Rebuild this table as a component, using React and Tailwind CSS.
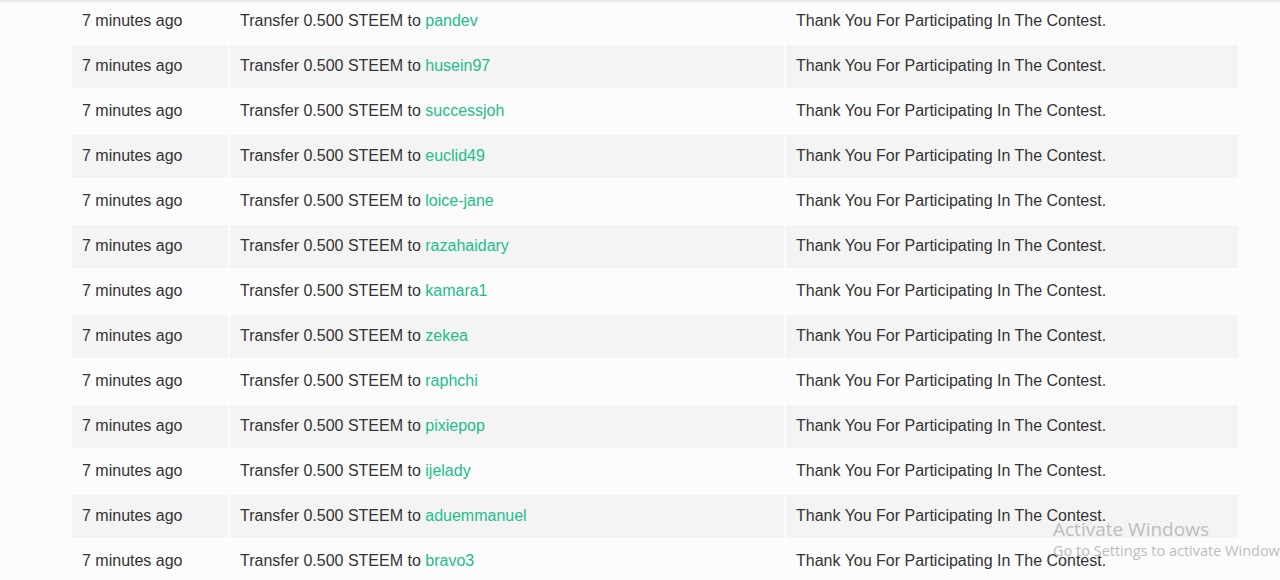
import React from "react";

const recipients = [
  "pandev",
  "husein97",
  "successjoh",
  "euclid49",
  "loice-jane",
  "razahaidary",
  "kamara1",
  "zekea",
  "raphchi",
  "pixiepop",
  "ijelady",
  "aduemmanuel",
  "bravo3",
];

const App = () => {
  return (
    <div
      className="relative h-[580px] overflow-hidden bg-[#fcfcfc] text-[#333333]"
      style={{ fontFamily: '"Liberation Sans", Arial, sans-serif' }}
    >
      {/* header shadow */}
      <div className="absolute top-0 left-0 w-full h-[3px] bg-gradient-to-b from-[#e2e2e2] to-[#f7f7f7]" />

      <table className="table-fixed border-separate border-spacing-[2px] w-[1170px] ml-[70px] -mt-[2px] text-base">
        <colgroup>
          <col className="w-[156px]" />
          <col className="w-[554px]" />
          <col className="w-[452px]" />
        </colgroup>
        <tbody>
          {recipients.map((name, i) => (
            <tr key={name} className={i % 2 === 1 ? "bg-[#f4f4f4]" : ""}>
              <td className="h-[43px] pl-[10px] pb-[2px] whitespace-nowrap">7 minutes ago</td>
              <td className="h-[43px] pl-[10px] pb-[2px] whitespace-nowrap">
                Transfer 0.500 STEEM to{" "}
                <a href="#" className="text-[#22bd8c]">
                  {name}
                </a>
              </td>
              <td className="h-[43px] pl-[10px] pb-[2px] whitespace-nowrap">
                Thank You For Participating In The Contest.
              </td>
            </tr>
          ))}
        </tbody>
      </table>

      {/* windows activation watermark */}
      <div
        className="absolute left-[1053px] top-[516px] whitespace-nowrap text-[#bdbdbd] pointer-events-none"
        style={{ fontFamily: '"Open Sans", "Noto Sans", sans-serif' }}
      >
        <div className="text-[19px] leading-[26px]">Activate Windows</div>
        <div className="text-[14.5px] leading-[18px]">Go to Settings to activate Windows.</div>
      </div>
    </div>
  );
};

export default App;
